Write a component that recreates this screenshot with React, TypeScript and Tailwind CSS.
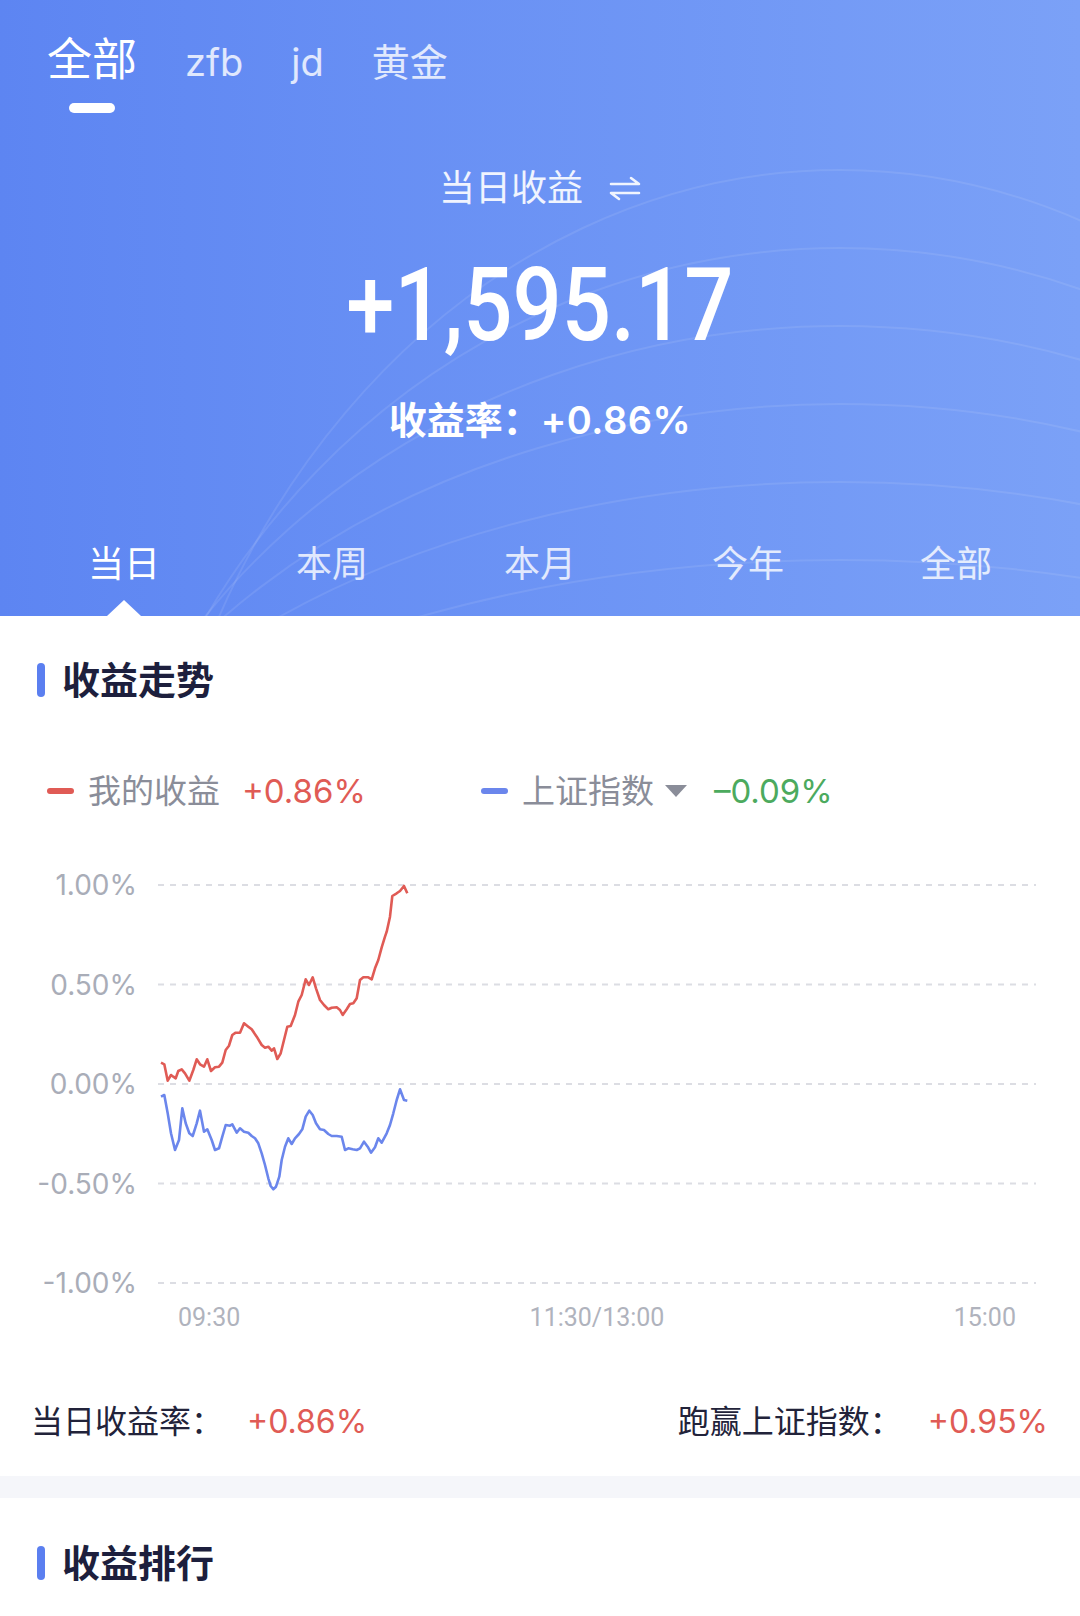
import React from 'react'

const sans = { fontFamily: "Inter, 'Noto Sans CJK SC', sans-serif" }

// points read off the reference chart (zoom coords: x/3, y/3 + 860)
const myLine: [number, number][] = [
  [483, 608], [493, 613], [503, 662], [513, 645], [520, 650], [527, 655], [535, 633], [545, 628], [555, 640],
  [568, 662], [580, 630], [590, 598], [600, 613], [612, 620], [622, 598], [633, 633], [645, 622], [657, 620],
  [667, 608], [677, 570], [687, 557], [697, 525], [707, 518], [720, 518], [732, 490], [745, 500], [755, 508],
  [770, 530], [785, 555], [795, 563], [805, 560], [815, 572], [822, 565], [832, 597], [842, 580], [852, 540],
  [862, 500], [872, 498], [885, 465], [895, 425], [905, 405], [917, 358], [927, 375], [938, 352], [948, 385],
  [960, 420], [972, 435], [985, 448], [995, 443], [1010, 442], [1020, 450], [1028, 465], [1040, 448], [1050, 432],
  [1060, 430], [1070, 415], [1080, 360], [1090, 352], [1105, 352], [1115, 358], [1125, 325], [1135, 300],
  [1145, 262], [1155, 230], [1160, 215], [1170, 170], [1177, 108], [1190, 100], [1200, 93], [1212, 78], [1222, 100],
]

const indexLine: [number, number][] = [
  [483, 710], [493, 705], [503, 760], [513, 820], [525, 870], [537, 840], [547, 745], [557, 790], [568, 820],
  [578, 828], [590, 790], [600, 752], [612, 815], [622, 808], [635, 840], [645, 870], [657, 865], [667, 830],
  [677, 795], [690, 797], [697, 793], [710, 818], [720, 805], [732, 815], [745, 818], [755, 828], [765, 835],
  [775, 850], [785, 880], [795, 915], [805, 955], [812, 978], [820, 988], [828, 980], [838, 950], [845, 900],
  [855, 860], [865, 835], [875, 852], [885, 835], [897, 822], [907, 808], [917, 770], [928, 752], [938, 765],
  [948, 790], [960, 808], [972, 810], [985, 822], [995, 828], [1010, 828], [1025, 830], [1035, 870], [1045, 865],
  [1058, 868], [1070, 870], [1080, 865], [1092, 845], [1103, 860], [1113, 878], [1125, 862], [1135, 835],
  [1145, 848], [1160, 820], [1170, 795], [1180, 760], [1190, 720], [1200, 688], [1212, 720], [1222, 722],
]

function toPath(pts: [number, number][]) {
  return pts
    .map(([x, y], i) => `${i === 0 ? 'M' : 'L'}${(x / 3 - 158).toFixed(1)} ${(y / 3 - 5).toFixed(1)}`)
    .join(' ')
}

function HeaderWaves() {
  const arcs = [0, 1, 2, 3, 4, 5, 6, 7, 8]
  return (
    <svg className="absolute inset-0 pointer-events-none" width="1080" height="616" viewBox="0 0 1080 616">
      {arcs.map(i => (
        <ellipse
          key={i}
          cx={840}
          cy={1000 + i * 10}
          rx={700 + i * 40}
          ry={830 - i * 68}
          fill="none"
          stroke="#ffffff"
          strokeOpacity={0.09}
          strokeWidth={2}
        />
      ))}
    </svg>
  )
}

function SwapIcon() {
  return (
    <svg width="32" height="26" viewBox="0 0 32 26" fill="none" stroke="currentColor" strokeWidth="2.6" strokeLinecap="round" strokeLinejoin="round">
      <path d="M2 9 H30 L22 3" />
      <path d="M30 18 H2 L10 24" />
    </svg>
  )
}

function SectionTitle({ title }: { title: string }) {
  return (
    <div className="flex items-center pl-[37px]">
      <span className="w-[8px] h-[34px] rounded-full bg-[#5b7ff0]"></span>
      <span className="ml-[17px] text-[38px] leading-[44px] font-bold text-[#1d1f3d]">{title}</span>
    </div>
  )
}

export default function App() {
  const topTabs = ['zfb', 'jd', '黄金']
  const periods = ['当日', '本周', '本月', '今年', '全部']
  const yLabels = ['1.00%', '0.50%', '0.00%', '-0.50%', '-1.00%']
  const gridY = [20, 119.5, 219, 318.5, 418]

  return (
    <div className="w-[1080px] min-h-[1616px] bg-white" style={sans}>
      {/* header */}
      <div className="relative h-[616px] overflow-hidden bg-gradient-to-r from-[#5d85f2] to-[#7ba1f7]">
        <HeaderWaves />
        <div className="relative flex flex-col">
          <div className="flex items-start gap-[48px] pl-[47px] pt-[32px]">
            <div className="flex flex-col items-center">
              <span className="text-[45px] leading-[56px] text-white">全部</span>
              <span className="mt-[15px] w-[46px] h-[10px] rounded-full bg-white"></span>
            </div>
            {topTabs.map(t => (
              <span key={t} className="text-[38px] leading-[56px] mt-[2px] text-white/80">{t}</span>
            ))}
          </div>

          <div className="mt-[55px] flex items-center justify-center gap-[26px] text-white/90">
            <span className="text-[36px] leading-[40px]">当日收益</span>
            <SwapIcon />
          </div>

          <div
            className="mt-[46px] text-center text-white text-[102px] leading-[102px] font-medium scale-x-[0.85]"
            style={{ fontFamily: 'Roboto, sans-serif' }}
          >
            +1,595.17
          </div>

          <div className="mt-[42px] text-center text-white text-[38px] leading-[44px] font-semibold">
            收益率：<span className="tracking-[0.5px]">+0.86%</span>
          </div>

          <div className="mt-[98px] grid grid-cols-5 px-[20px]">
            {periods.map((p, i) => (
              <div key={p} className="flex flex-col items-center">
                <span className={`text-[36px] leading-[48px] ${i === 0 ? 'text-white' : 'text-white/80'}`}>{p}</span>
                {i === 0 ? (
                  <span className="mt-[12px] w-0 h-0 border-l-[17px] border-r-[17px] border-b-[16px] border-l-transparent border-r-transparent border-b-white"></span>
                ) : (
                  <span className="mt-[12px] h-[16px]"></span>
                )}
              </div>
            ))}
          </div>
        </div>
      </div>

      {/* trend */}
      <div className="mt-[42px]">
        <SectionTitle title="收益走势" />
      </div>

      <div className="mt-[69px] flex items-center pl-[47px] text-[33px] leading-[40px]">
        <span className="w-[27px] h-[6px] rounded-full bg-[#e05b55]"></span>
        <span className="ml-[14px] text-[#8a8d99]">我的收益</span>
        <span className="ml-[22px] text-[#e05b55]">+0.86%</span>
        <span className="ml-[115px] w-[27px] h-[6px] rounded-full bg-[#6b86ec]"></span>
        <span className="ml-[14px] text-[#8a8d99]">上证指数</span>
        <span className="ml-[11px] w-0 h-0 border-l-[11px] border-r-[11px] border-t-[12px] border-l-transparent border-r-transparent border-t-[#8a8d99]"></span>
        <span className="ml-[27px] text-[#4caa5e]">–0.09%</span>
      </div>

      <div className="mt-[54px] flex">
        <div className="w-[137px] h-[438px] flex flex-col justify-between items-end text-[28px] leading-[40px] text-[#a9adb8]">
          {yLabels.map(l => (
            <span key={l}>{l}</span>
          ))}
        </div>
        <div className="ml-[21px] w-[878px] flex flex-col">
          <svg width="878" height="438" viewBox="0 0 878 438">
            {gridY.map(y => (
              <line key={y} x1="0" x2="878" y1={y} y2={y} stroke="#dcdde3" strokeWidth="2" strokeDasharray="6 6" />
            ))}
            <path d={toPath(myLine)} fill="none" stroke="#e05b55" strokeWidth="2.6" strokeLinejoin="round" />
            <path d={toPath(indexLine)} fill="none" stroke="#6b86ec" strokeWidth="2.6" strokeLinejoin="round" />
          </svg>
          <div
            className="flex justify-between px-[20px] text-[25px] leading-[30px] text-[#b0b3bd]"
            style={{ fontFamily: 'Roboto, sans-serif' }}
          >
            <span>09:30</span>
            <span>11:30/13:00</span>
            <span>15:00</span>
          </div>
        </div>
      </div>

      <div className="mt-[69px] flex items-center justify-between pl-[31px] pr-[32px] text-[32px] leading-[40px]">
        <div className="flex items-center">
          <span className="text-[#22233a]">当日收益率：</span>
          <span className="ml-[24px] text-[#e05b55]">+0.86%</span>
        </div>
        <div className="flex items-center">
          <span className="text-[#22233a]">跑赢上证指数：</span>
          <span className="ml-[26px] text-[#e05b55]">+0.95%</span>
        </div>
      </div>

      <div className="mt-[34px] h-[22px] bg-[#f5f6fa]"></div>

      <div className="mt-[43px] pb-[32px]">
        <SectionTitle title="收益排行" />
      </div>
    </div>
  )
}
